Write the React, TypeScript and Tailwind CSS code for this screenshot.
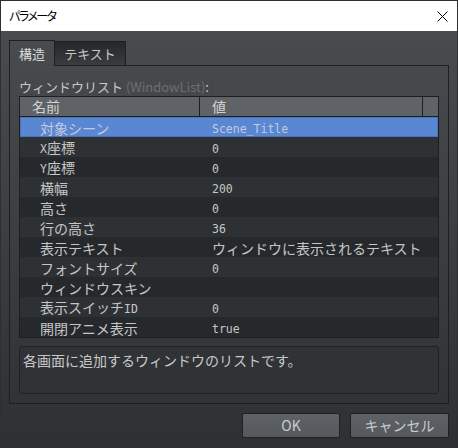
import React from "react";

const CJK = "font-['Noto_Sans_CJK_JP','Noto_Sans',sans-serif]";

const ROWS: [string, string][] = [
  ["対象シーン", "Scene_Title"],
  ["X座標", "0"],
  ["Y座標", "0"],
  ["横幅", "200"],
  ["高さ", "0"],
  ["行の高さ", "36"],
  ["表示テキスト", "ウィンドウに表示されるテキスト"],
  ["フォントサイズ", "0"],
  ["ウィンドウスキン", ""],
  ["表示スイッチID", "0"],
  ["開閉アニメ表示", "true"],
];

// Latin runs in the monospace face, Japanese runs larger in the CJK face
function Mixed({ text }: { text: string }) {
  const parts = text.split(/([\x00-\x7f]+)/).filter((p) => p.length > 0);
  return (
    <>
      {parts.map((p, i) =>
        /^[\x00-\x7f]+$/.test(p) ? (
          <span key={i} className="font-['DejaVu_Sans_Mono',monospace] text-[11.5px]">
            {p}
          </span>
        ) : (
          <span key={i} className={`${CJK} text-[14px]`}>
            {p}
          </span>
        )
      )}
    </>
  );
}

export default function App() {
  return (
    <div className={`w-[458px] h-[448px] border border-[#2f2f2f] flex flex-col ${CJK}`}>
      <div className="h-[30px] bg-white flex items-center justify-between pl-[8px] pr-[9px]">
        <span className="text-[12px] tracking-[-1.5px] text-black [font-feature-settings:'palt']">パラメータ</span>
        <svg width="11" height="11" viewBox="0 0 11 11" className="mt-[1px]">
          <path d="M0.5 0.5 L10.5 10.5 M10.5 0.5 L0.5 10.5" stroke="#000" strokeWidth="1" />
        </svg>
      </div>

      <div className="flex-1 bg-gradient-to-b from-[#494c4f] to-[#2e3134] px-[8px] pt-[9px] pb-[9px] flex flex-col">
        {/* tabs */}
        <div className="h-[26px] flex items-end">
          <div className="w-[46px] h-[26px] border border-b-0 border-[#1d1f21] flex items-center justify-center text-[13px] text-[#dcdcdc]">
            構造
          </div>
          <div className="w-[71px] h-[25px] border border-l-0 border-[#1d1f21] bg-gradient-to-b from-[#25282b] to-[#3a3d40] flex items-center justify-center text-[13px] text-[#c8c8c8]">
            テキスト
          </div>
          <div className="flex-1 h-full border-b border-[#1d1f21]" />
        </div>

        {/* panel */}
        <div className="h-[338px] border border-t-0 border-[#1d1f21] px-[9px] pt-[12px] pb-[9px] flex flex-col">
          <div className="h-[18px] leading-[18px] text-[13px] text-[#c8c8c8] whitespace-nowrap">
            ウィンドウリスト <span className="text-[#6b6f73]">(WindowList)</span>:
          </div>

          <div className="border border-[#1d1f21] flex flex-col">
            <div className="h-[20px] bg-[#5f6367] border-b border-[#1d1f21] flex text-[14px] text-[#d2d2d2]">
              <div className="w-[180px] border-r border-[#1d1f21] pl-[12px] leading-[19px]">名前</div>
              <div className="w-[223px] border-r border-[#1d1f21] pl-[12px] leading-[19px]">値</div>
              <div className="flex-1" />
            </div>
            {ROWS.map(([name, value], i) => {
              const selected = i === 0;
              const bg = selected
                ? "bg-[#5a87d3] border border-[#4873b8] text-[#c3cbd8]"
                : i % 2 === 1
                ? "bg-[#2e3134] text-[#c6c6c6]"
                : "bg-[#26292c] text-[#c6c6c6]";
              return (
                <div key={name} className={`h-[20px] flex items-center leading-[20px] whitespace-nowrap ${bg}`}>
                  <div className={selected ? "w-[179px] pl-[19px]" : "w-[180px] pl-[20px]"}>
                    <Mixed text={name} />
                  </div>
                  <div className="pl-[12px]">
                    <Mixed text={value} />
                  </div>
                </div>
              );
            })}
          </div>

          <div className="mt-[8px] h-[48px] rounded-[3px] border border-[#1f2123] bg-[#303336] px-[3px] pt-[3px] text-[14px] leading-[20px] text-[#c8c8c8]">
            各画面に追加するウィンドウのリストです。
          </div>
        </div>

        {/* buttons */}
        <div className="mt-[9px] h-[25px] flex justify-end gap-[10px]">
          <button className="w-[98px] h-[25px] rounded-[2px] border border-[#1f2123] bg-gradient-to-b from-[#5e6266] to-[#55595d] text-[14px] text-[#c8ccd0]">
            OK
          </button>
          <button className="w-[99px] h-[25px] rounded-[2px] border border-[#1f2123] bg-gradient-to-b from-[#5e6266] to-[#55595d] text-[14px] text-[#c8ccd0]">
            キャンセル
          </button>
        </div>
      </div>
    </div>
  );
}
